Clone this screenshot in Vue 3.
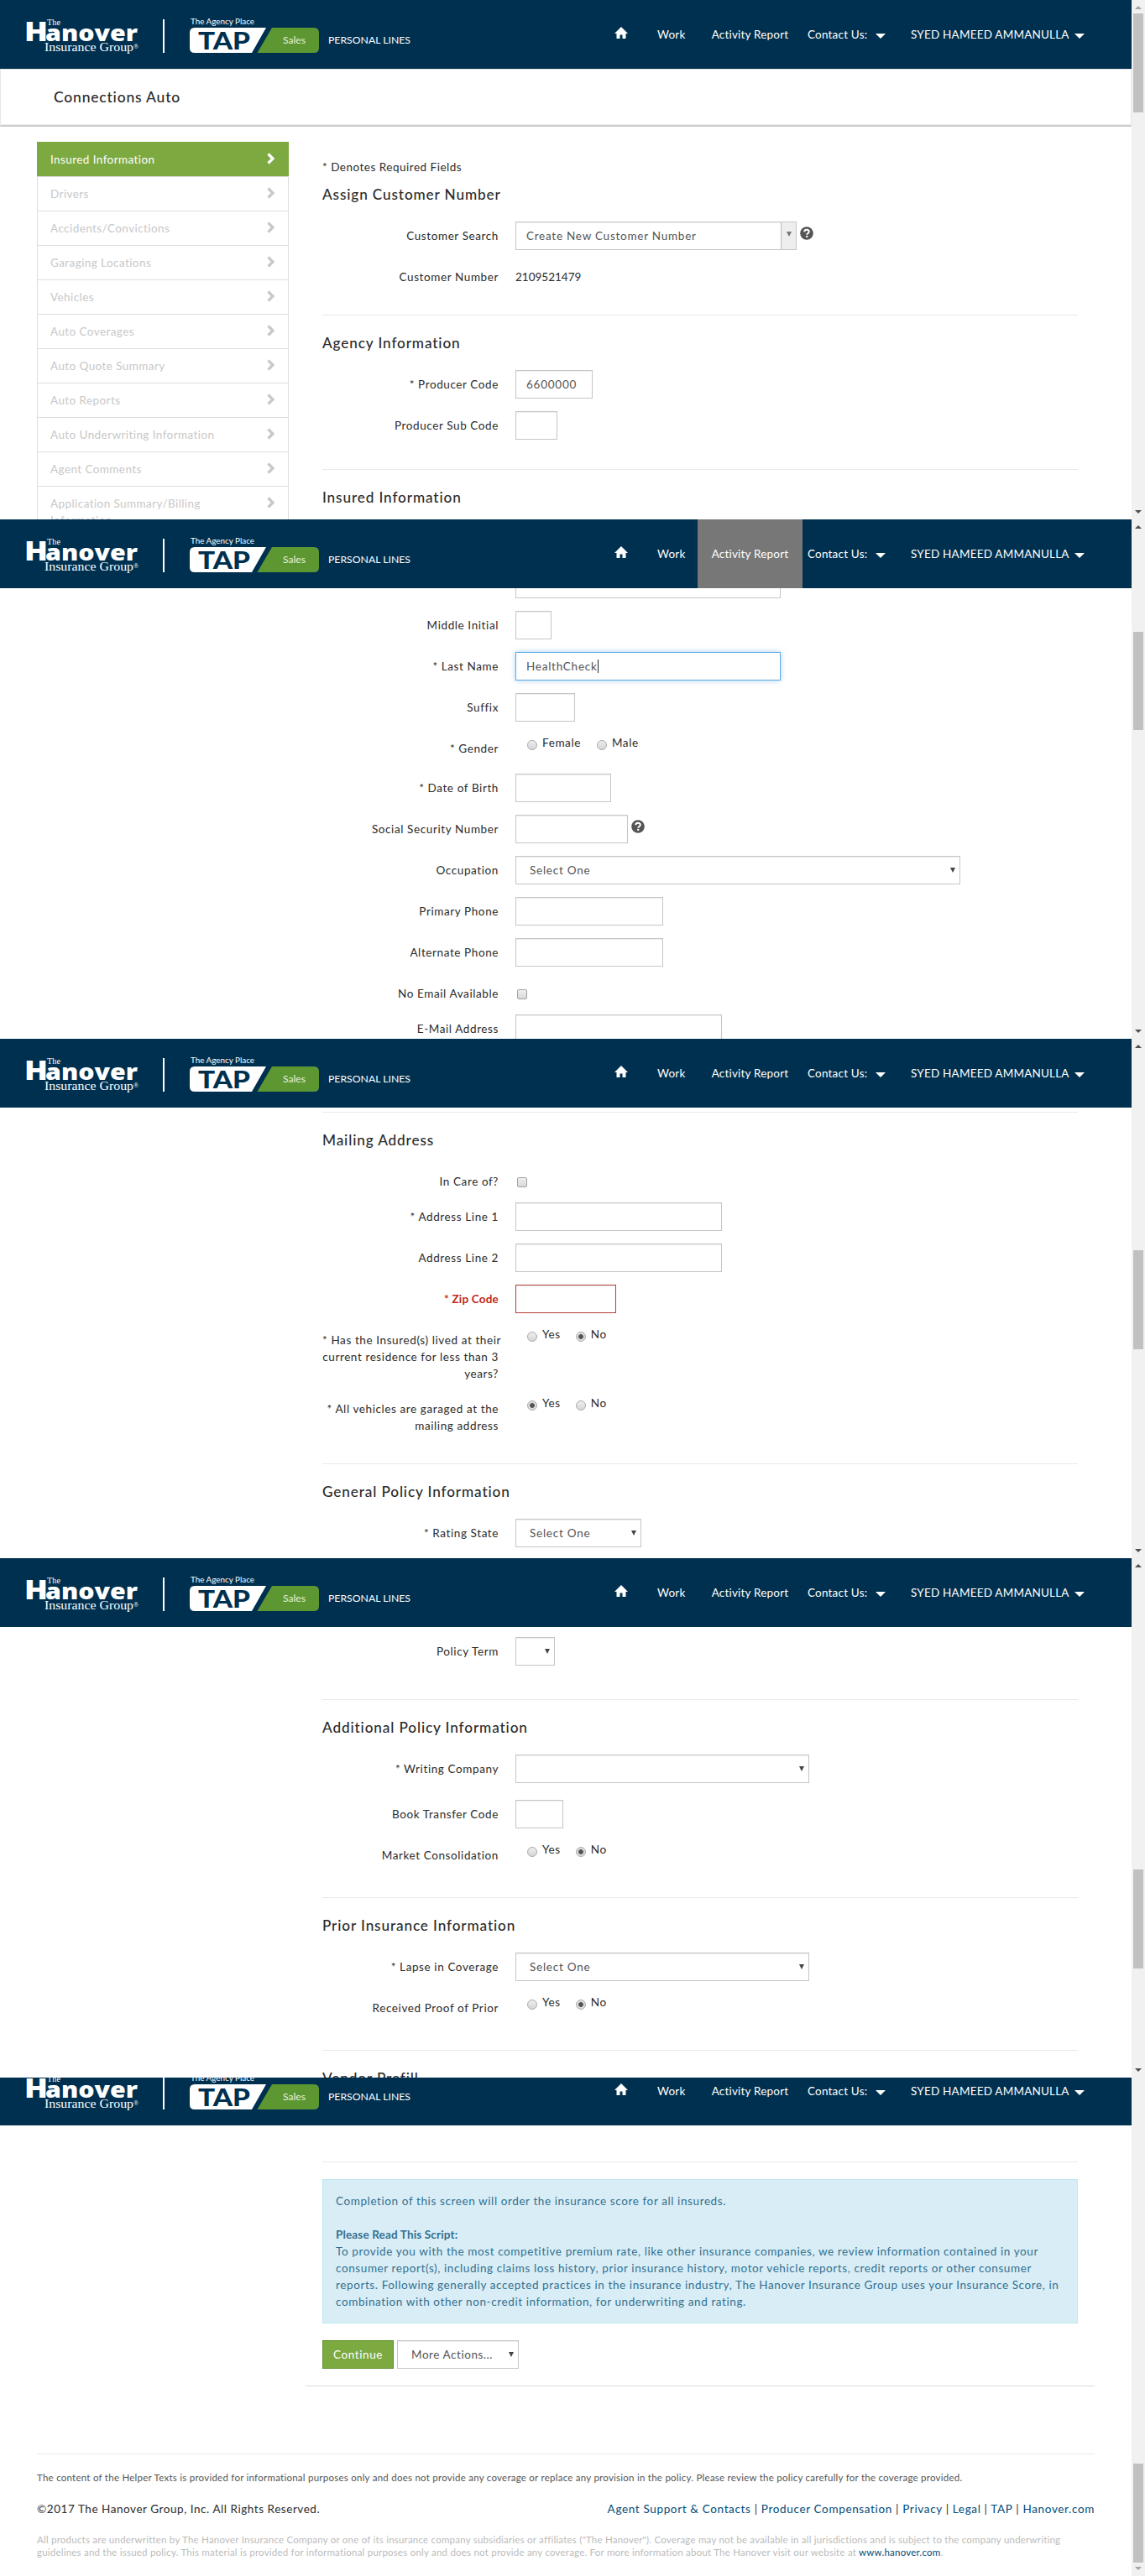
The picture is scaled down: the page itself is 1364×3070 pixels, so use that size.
<script setup>
const side = [
  'Insured Information', 'Drivers', 'Accidents/Convictions', 'Garaging Locations', 'Vehicles',
  'Auto Coverages', 'Auto Quote Summary', 'Auto Reports', 'Auto Underwriting Information',
  'Agent Comments', 'Application Summary/Billing Information',
]

const sec = (title) => ({ type: 'section', title })
const hr = { type: 'hr' }
const input = (label, w, extra = {}) => ({ type: 'input', label, w, h: 49, ...extra })
const select = (label, w, text = '', h = 49) => ({ type: 'select', label, w, text, h })
const radio = (label, options, picked, h = 47, gap = 18) => ({ type: 'radio', label, options, picked, h, gap })
const yn = ['Yes', 'No']

const panes = [
  {
    cls: 'p1', thumb: [16, 118], up: 'dim', down: 'dark', full: true,
    rows: [
      { type: 'note', text: '* Denotes Required Fields' },
      { type: 'section', title: 'Assign Customer Number', first: true },
      input('Customer Search', 335, { text: 'Create New Customer Number', combo: true, help: true }),
      { type: 'static', label: 'Customer Number', text: '2109521479', h: 42 },
      hr, sec('Agency Information'),
      input('* Producer Code', 92, { text: '6600000' }),
      input('Producer Sub Code', 50),
      hr, sec('Insured Information'),
    ],
  },
  {
    cls: 'p2', thumb: [134, 117], up: 'dark', down: 'dark', active: true,
    rows: [
      input('', 316),
      input('Middle Initial', 43),
      input('* Last Name', 316, { text: 'HealthCheck', focus: true }),
      input('Suffix', 71),
      radio('* Gender', ['Female', 'Male'], -1, 47, 19),
      input('* Date of Birth', 114),
      input('Social Security Number', 134, { help: true }),
      select('Occupation', 530, 'Select One'),
      input('Primary Phone', 176),
      input('Alternate Phone', 176),
      { type: 'check', label: 'No Email Available', h: 42 },
      input('E-Mail Address', 246),
    ],
  },
  {
    cls: 'p3', thumb: [252, 118], up: 'dark', down: 'dark',
    rows: [
      hr, sec('Mailing Address'),
      { type: 'check', label: 'In Care of?', h: 42 },
      input('* Address Line 1', 246),
      input('Address Line 2', 246),
      input('* Zip Code', 120, { error: true }),
      radio('* Has the Insured(s) lived at their\ncurrent residence for less than 3\nyears?', yn, 1, 82),
      radio('* All vehicles are garaged at the\nmailing address', yn, 0, 62),
      hr, sec('General Policy Information'),
      select('* Rating State', 150, 'Select One'),
    ],
  },
  {
    cls: 'p4', thumb: [371, 118], up: 'dark', down: 'dark',
    rows: [
      select('Policy Term', 47, '', 54),
      hr, sec('Additional Policy Information'),
      select('* Writing Company', 350, '', 54),
      input('Book Transfer Code', 57),
      radio('Market Consolidation', yn, 1),
      hr, sec('Prior Insurance Information'),
      select('* Lapse in Coverage', 350, 'Select One'),
      radio('Received Proof of Prior', yn, 1),
      hr, sec('Vendor Prefill'),
    ],
  },
  { cls: 'p5', thumb: [460, 118], up: '', down: 'dim', end: true, rows: [] },
]

const links = ['Agent Support & Contacts', 'Producer Compensation', 'Privacy', 'Legal', 'TAP', 'Hanover.com']
</script>

<template>
  <div class="sheet">
    <section v-for="p in panes" :key="p.cls" class="pane" :class="p.cls">
      <div class="page">
        <header class="top">
          <svg class="brand" width="500" height="82" viewBox="0 0 500 82">
            <g fill="#fff">
              <text x="56" y="30" class="serif" font-size="10.500" textLength="16" lengthAdjust="spacingAndGlyphs">The</text>
              <text x="29" y="49" class="logo" font-size="31" textLength="28" lengthAdjust="spacingAndGlyphs">H</text>
              <text x="54" y="49" class="logo" font-size="26" textLength="110" lengthAdjust="spacingAndGlyphs">anover</text>
              <text x="53" y="60.500" class="serif" font-size="15" textLength="106" lengthAdjust="spacingAndGlyphs">Insurance Group</text>
              <text x="159" y="58" class="serif" font-size="8">®</text>
              <rect x="194" y="23" width="2" height="40" />
              <text x="227" y="29" class="gill" font-size="9.5" textLength="76" lengthAdjust="spacingAndGlyphs">The Agency Place</text>
              <path d="M232 33H317L300 63H232Q226 63 226 57V39Q226 33 232 33Z" />
            </g>
            <path d="M324 33H374Q380 33 380 39V57Q380 63 374 63H306.500Z" fill="#5d9732" />
            <text x="236" y="59" class="tap" font-size="29" fill="#00304f" textLength="62" lengthAdjust="spacingAndGlyphs">TAP</text>
            <text x="337" y="52" class="gill" font-size="11.500" fill="#e6f0dc" textLength="27" lengthAdjust="spacingAndGlyphs">Sales</text>
            <text x="391" y="52" class="gill" font-size="11.500" fill="#fff" textLength="98" lengthAdjust="spacingAndGlyphs">PERSONAL LINES</text>
          </svg>
          <nav class="nav">
            <span class="home">
              <svg width="16" height="14" viewBox="0 0 16 14"><path d="M8 0L16 8H13.500V14H9.500V9.500H6.500V14H2.500V8H0Z" fill="#fff" /></svg>
            </span>
            <span class="work">Work</span>
            <span class="report" :class="{ on: p.active }">Activity Report</span>
            <span class="contact">Contact Us:<i class="tri"></i></span>
            <span class="user">SYED HAMEED AMMANULLA<i class="tri"></i></span>
          </nav>
        </header>

        <div v-if="p.full" class="titlebar">Connections Auto</div>

        <div class="body">
          <aside v-if="p.full" class="side">
            <div v-for="(s, i) in side" :key="s" class="item" :class="{ cur: i === 0 }">
              <span>{{ s }}</span>
              <svg width="10" height="14" viewBox="0 0 10 14"><path d="M1.500 1.500L7 7L1.500 12.500" fill="none" stroke="currentColor" stroke-width="3.200" /></svg>
            </div>
          </aside>

          <main v-if="!p.end" class="main">
            <template v-for="(r, i) in p.rows" :key="i">
              <div v-if="r.type === 'hr'" class="hr"></div>
              <h3 v-else-if="r.type === 'section'" :class="{ first: r.first }">{{ r.title }}</h3>
              <p v-else-if="r.type === 'note'" class="note">{{ r.text }}</p>
              <div v-else class="row" :style="{ height: r.h + 'px' }">
                <label :class="{ err: r.error }">{{ r.label }}</label>
                <span v-if="r.type === 'static'" class="static">{{ r.text }}</span>
                <div v-else-if="r.type === 'input'" class="field" :class="{ focus: r.focus, error: r.error }" :style="{ width: r.w + 'px' }">
                  <span>{{ r.text }}</span><i v-if="r.focus" class="cursor"></i>
                  <b v-if="r.combo" class="combo"><i class="dd"></i></b>
                </div>
                <div v-else-if="r.type === 'select'" class="field select" :style="{ width: r.w + 'px' }">
                  <span>{{ r.text }}</span><i class="dd"></i>
                </div>
                <span v-else-if="r.type === 'check'" class="check"></span>
                <div v-else class="radios" :style="{ gap: r.gap + 'px' }">
                  <span v-for="(o, k) in r.options" :key="o" class="opt"><i class="radio" :class="{ sel: k === r.picked }"></i>{{ o }}</span>
                </div>
                <svg v-if="r.help" class="help" width="16" height="16" viewBox="0 0 16 16">
                  <circle cx="8" cy="8" r="7.800" fill="#555" />
                  <path d="M5.200 6.300C5.200 2.900 10.800 3 10.800 6.100C10.800 8 8.200 7.900 8.200 9.700" fill="none" stroke="#fff" stroke-width="2" />
                  <rect x="7.100" y="10.900" width="2.200" height="2" fill="#fff" />
                </svg>
              </div>
            </template>
          </main>

          <div v-else class="end">
            <div class="closing">
              <div class="hr"></div>
              <div class="alert">
                <p>Completion of this screen will order the insurance score for all insureds.</p>
                <p class="gap"></p>
                <p class="strong">Please Read This Script:</p>
                <p>To provide you with the most competitive premium rate, like other insurance companies, we review information contained in your</p>
                <p>consumer report(s), including claims loss history, prior insurance history, motor vehicle reports, credit reports or other consumer</p>
                <p>reports. Following generally accepted practices in the insurance industry, The Hanover Insurance Group uses your Insurance Score, in</p>
                <p>combination with other non-credit information, for underwriting and rating.</p>
              </div>
              <div class="actions">
                <div class="btn">Continue</div>
                <div class="field select more"><span>More Actions...</span><i class="dd"></i></div>
              </div>
            </div>
            <footer>
              <p class="helper">The content of the Helper Texts is provided for informational purposes only and does not provide any coverage or replace any provision in the policy. Please review the policy carefully for the coverage provided.</p>
              <div class="rights">
                <span>©2017 The Hanover Group, Inc. All Rights Reserved.</span>
                <span class="links"><template v-for="(l, i) in links" :key="l"><template v-if="i"> | </template><a>{{ l }}</a></template></span>
              </div>
              <p class="legal">All products are underwritten by The Hanover Insurance Company or one of its insurance company subsidiaries or affiliates ("The Hanover"). Coverage may not be available in all jurisdictions and is subject to the company underwriting</p>
              <p class="legal two">guidelines and the issued policy. This material is provided for informational purposes only and does not provide any coverage. For more information about The Hanover visit our website at <a>www.hanover.com</a>.</p>
            </footer>
          </div>
        </div>
      </div>

      <div class="scroll">
        <i v-if="p.up" class="arr up" :class="p.up"></i>
        <i class="thumb" :style="{ top: p.thumb[0] + 'px', height: p.thumb[1] + 'px' }"></i>
        <i class="arr down" :class="p.down"></i>
      </div>
    </section>
  </div>
</template>

<style>
body { background: #fff; }
</style>

<style scoped>
.sheet { width: 1364px; font: 13.5px/20px Lato, "Open Sans", sans-serif; letter-spacing: 0.6px; color: #2b2b2b; }
.sheet * { box-sizing: border-box; }
p, h3 { margin: 0; }
a { color: #004b79; }
.pane { display: flex; overflow: hidden; width: 1364px; height: 619px; background: #fff; }
.p5 { height: 594px; }
.page { width: 1348px; flex: none; white-space: nowrap; }
.top { position: relative; z-index: 2; display: flex; justify-content: space-between; height: 82px; background: #00304f; color: #fff; }
.p5 .top { margin-top: -25px; }
.brand { flex: none; display: block; }
.serif { font-family: "Liberation Serif", serif; letter-spacing: 0; }
.logo { font-family: "Open Sans", sans-serif; font-weight: 800; letter-spacing: 0; }
.tap { font-family: Lato, sans-serif; font-weight: 900; letter-spacing: 0; }
.gill { font-family: Lato, sans-serif; letter-spacing: 0; }
.nav { display: flex; font-size: 13.5px; line-height: 82px; letter-spacing: 0.2px; width: 617px; }
.nav span { display: block; height: 82px; flex: none; }
.home { width: 37px; }
.home svg { display: block; margin: 32px 0 0 1px; }
.work { width: 63px; padding-left: 15px; }
.report { width: 125px; text-align: center; }
.report.on { background: #777; }
.contact { width: 129px; padding-left: 6px; }
.contact .tri { margin-left: 10px; }
.tri { display: inline-block; margin-left: 6px; border: solid transparent; border-width: 6px 6.500px 0; border-top-color: #fff; }
.titlebar { height: 69px; border: 1px solid #e7e7e7; border-bottom: 2px solid #ccc; box-shadow: inset 0 -1px 0 #eee; padding-left: 63px; font: 500 17.5px/66px Lato, sans-serif; letter-spacing: 0.8px; }
.body { display: flex; }
.side { width: 300px; margin: 18px 0 0 44px; flex: none; letter-spacing: 0.42px; }
.item { display: flex; justify-content: space-between; height: 41px; padding: 10px 15px 0; border: solid #ddd; border-width: 1px 1px 0; color: #c8c8c8; }
.item span { width: 215px; white-space: normal; }
.item svg { margin: 2px 0 0; flex: none; }
.item.cur { background: #7da941; border-color: #7da941; color: #fff; }
.item:last-child { height: 61px; }
.main { width: 900px; margin-left: 384px; }
.p1 .main { margin: 38px 0 0 40px; }
.p2 .main { margin-top: -22px; }
.p3 .main { margin-top: 5px; }
.p4 .main { margin-top: 12px; }
.note { letter-spacing: 0.5px; }
.hr { height: 1px; background: #e9e9e9; margin-top: 20px; }
.p3 .hr:first-child { margin-top: 0; }
h3 { height: 20px; margin: 23px 0 22px; font-size: 17.2px; font-weight: 500; line-height: 20px; letter-spacing: 0.87px; }
h3.first { margin-top: 13px; }
.row { display: flex; align-items: flex-start; }
label { width: 210px; margin-right: 20px; padding-top: 7px; text-align: right; white-space: pre; flex: none; }
label.err { color: #c0281c; font-weight: 700; letter-spacing: 0.2px; }
.static { padding-top: 7px; letter-spacing: 0; }
.field { position: relative; display: flex; align-items: center; height: 34px; padding-left: 12px; border: 1px solid #c6c6c6; box-shadow: inset 0 1px 1px rgba(0,0,0,.075); color: #555; flex: none; letter-spacing: 0.75px; background: #fff; }
.field.focus { border-color: #5faae4; box-shadow: 0 0 6px rgba(102,175,233,.6); }
.field.error { border-color: #b5403a; }
.cursor { width: 1px; height: 16px; background: #222; }
.select { padding-left: 16px; justify-content: space-between; }
.dd { display: block; border: solid transparent; border-width: 6px 3px 0; border-top-color: #444; margin-right: 5px; }
.combo { position: absolute; right: 0; top: 0; width: 18px; height: 32px; background: #eee; border-left: 1px solid #bbb; display: flex; align-items: center; justify-content: center; }
.combo .dd { margin: -4px 0 0; border-top-color: #777; }
.help { margin: 6px 0 0 4px; }
.check { width: 12px; height: 12px; margin: 12px 0 0 2px; border: 1px solid #a3a3a3; border-radius: 2px; background: linear-gradient(#eee, #d9d9d9); }
.radios { display: flex; padding: 0 0 0 14px; }
.opt { display: flex; }
.radio { width: 12px; height: 12px; margin: 7px 6px 0 0; border: 1px solid #aaa; border-radius: 50%; background: linear-gradient(#eee, #d6d6d6); }
.radio.sel { background: radial-gradient(circle, #555 0 2.500px, #dedede 3.300px); }
.scroll { position: relative; width: 16px; background: #f1f1f1; }
.thumb { position: absolute; left: 2px; width: 12px; background: #c1c1c1; }
.arr { position: absolute; left: 4px; border: solid transparent; }
.up { top: 7px; border-width: 0 4px 4px; border-bottom-color: #505050; }
.down { bottom: 7px; border-width: 4px 4px 0; border-top-color: #505050; }
.up.dim { border-bottom-color: #a3a3a3; }
.down.dim { border-top-color: #a3a3a3; }
.end { width: 1260px; margin-left: 44px; padding-top: 43px; }
.closing { margin-left: 320px; padding: 0 20px 20px; height: 268px; border-bottom: 1px solid #ddd; }
.closing .hr { margin: 0 0 20px; }
.alert { height: 172px; padding: 15px; border: 1px solid #bce8f1; background: #d9edf7; color: #31708f; }
.gap { height: 20px; }
.strong { font-weight: 700; letter-spacing: 0.15px; }
.actions { display: flex; gap: 4px; margin-top: 20px; }
.btn { width: 85px; height: 34px; border: 1px solid #5f8f2c; background: #7da941; color: #fff; text-align: center; line-height: 32px; }
.more { width: 145px; letter-spacing: 0.55px; }
footer { margin-top: 80px; border-top: 1px solid #eaeaea; height: 140px; }
.helper { margin-top: 18px; font-size: 11.5px; color: #555; letter-spacing: 0.25px; }
.rights { display: flex; justify-content: space-between; margin-top: 17px; letter-spacing: 0.55px; }
.links { letter-spacing: 0.65px; }
.legal { margin-top: 19px; font-size: 11.5px; line-height: 15px; color: #bbb; letter-spacing: 0.22px; }
.legal.two { margin: 0; }
</style>
